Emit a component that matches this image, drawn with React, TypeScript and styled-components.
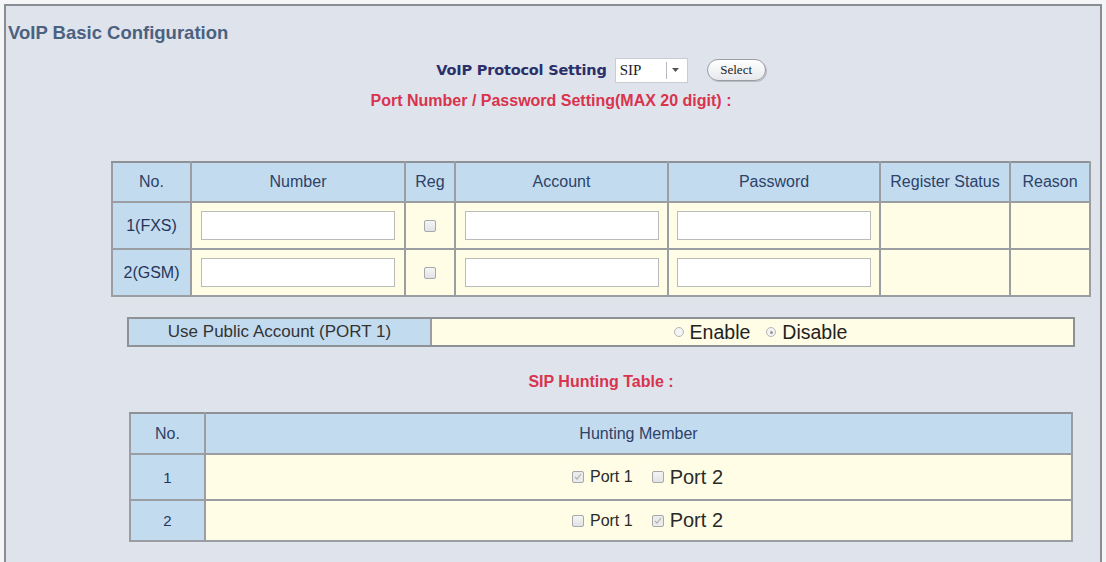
import React from "react";
import styled, { createGlobalStyle } from "styled-components";

const GlobalStyle = createGlobalStyle`
  html, body {
    margin: 0;
    padding: 0;
    background: #f4f5f7;
    font-family: "Liberation Sans", Arial, sans-serif;
  }
`;

const Frame = styled.div`
  margin: 4px 0 0 4px;
  width: 1098px;
  min-height: 560px;
  box-sizing: border-box;
  border: 2px solid #898d93;
  border-bottom: none;
  background: #dfe3ec;
  padding-top: 16px;
`;

const Title = styled.div`
  padding-left: 2px;
  font-size: 18.5px;
  font-weight: bold;
  color: #4b6180;
  line-height: 22px;
`;

const Content = styled.div`
  width: 990px;
  margin-left: 100px;
  display: flex;
  flex-direction: column;
  align-items: center;
`;

const ProtocolRow = styled.div`
  display: flex;
  align-items: center;
  gap: 8px;
  margin-top: 13px;
  height: 26px;
`;

const ProtocolLabel = styled.span`
  font-family: "DejaVu Sans", Verdana, sans-serif;
  font-size: 14.5px;
  font-weight: bold;
  color: #2b2f6a;
  letter-spacing: -0.2px;
`;

const SelectBox = styled.div`
  width: 73px;
  height: 25px;
  box-sizing: border-box;
  background: #fff;
  border: 1px solid #c9ccd2;
  display: flex;
  align-items: center;
  font-family: "Liberation Serif", "Times New Roman", serif;
  font-size: 15px;
  color: #222;
`;

const SelectValue = styled.span`
  flex: 1;
  padding-left: 4px;
`;

const SelectArrow = styled.span`
  width: 18px;
  height: 17px;
  border-left: 1px solid #b5b8be;
  display: flex;
  align-items: center;
  justify-content: center;
  margin-right: 2px;
`;

const PillButton = styled.button`
  margin-left: 11px;
  width: 59px;
  height: 22px;
  border: 1px solid #9a9da3;
  border-radius: 11px;
  background: linear-gradient(#ffffff, #e6e8ec);
  box-shadow: 1px 1px 0 #b8bbc1;
  font-family: "Liberation Serif", "Times New Roman", serif;
  font-size: 13px;
  color: #222;
  padding: 0;
`;

const RedHeading = styled.div`
  text-align: center;
  font-size: 16px;
  font-weight: bold;
  color: #d8344d;
  line-height: 20px;
`;

const PortHeading = styled(RedHeading)`
  margin-top: 8px;
  width: 1094px;
  margin-left: -100px;
`;

const Table = styled.table`
  border-collapse: collapse;
  border: 2px solid #8e9296;
  table-layout: fixed;
`;

const PortTable = styled(Table)`
  margin-top: 50px;
`;

const Th = styled.th<{ $w: number; $h?: number }>`
  width: ${(p) => p.$w}px;
  height: ${(p) => p.$h ?? 40}px;
  padding: 0;
  background: #c3dbef;
  border: 2px solid #9a9ea3;
  border-top-color: #8e9296;
  font-weight: normal;
  font-size: 16px;
  color: #2c4268;
  box-sizing: border-box;
`;

const Td = styled.td<{ $label?: boolean; $h?: number; $fs?: number }>`
  height: ${(p) => p.$h ?? 44}px;
  padding: 0;
  text-align: center;
  background: ${(p) => (p.$label ? "#c3dbef" : "#fffde5")};
  border: 2px solid #9a9ea3;
  border-top-color: ${(p) => (p.$label ? "#9a9ea3" : "#a9aba2")};
  font-size: ${(p) => p.$fs ?? 16}px;
  color: #24365a;
`;

const TextInput = styled.input`
  width: 194px;
  height: 29px;
  box-sizing: border-box;
  border: 1px solid #b9bbb6;
  background: #fff;
  display: block;
  margin: 0 auto;
`;

const Box = styled.span<{ $checked?: boolean }>`
  display: inline-flex;
  align-items: center;
  justify-content: center;
  width: 12px;
  height: 12px;
  box-sizing: border-box;
  border: 1px solid #a7a9ad;
  border-radius: 2px;
  background: ${(p) => (p.$checked ? "#ebebeb" : "linear-gradient(#f5f5f5, #e2e3e5)")};
  vertical-align: middle;
`;

const PublicTable = styled.div`
  margin-top: 20px;
  width: 948px;
  height: 30px;
  box-sizing: border-box;
  border: 2px solid #8e9296;
  display: flex;
`;

const PublicLabel = styled.div`
  width: 301px;
  background: #c3dbef;
  border-right: 2px solid #9a9ea3;
  display: flex;
  align-items: center;
  justify-content: center;
  font-size: 17px;
  color: #333;
`;

const PublicValue = styled.div`
  flex: 1;
  background: #fffde5;
  display: flex;
  align-items: center;
  justify-content: center;
  font-size: 19.5px;
  color: #222;
  padding-left: 16px;
`;

const Radio = styled.span<{ $on?: boolean }>`
  width: 10px;
  height: 10px;
  box-sizing: border-box;
  border-radius: 50%;
  border: 1px solid #b4b6ba;
  background: #f4f4f4;
  display: inline-flex;
  align-items: center;
  justify-content: center;
  margin: 0 6px 0 0;
  & + span + & {
    margin-left: 16px;
  }
  &::after {
    content: "";
    width: 3px;
    height: 3px;
    border-radius: 50%;
    background: ${(p) => (p.$on ? "#9a9a9a" : "transparent")};
  }
`;

const HuntHeading = styled(RedHeading)`
  margin-top: 25px;
`;

const HuntTable = styled(Table)`
  margin-top: 20px;
`;

const Members = styled.div`
  display: flex;
  align-items: center;
  justify-content: center;
  gap: 6px;
  padding-left: 18px;
  color: #2a2a2a;
`;

const Small = styled.span`
  font-size: 16px;
  margin-right: 13px;
`;

const Large = styled.span`
  font-size: 20px;
`;

const Check = ({ on }: { on?: boolean }) => (
  <Box $checked={on}>
    {on && (
      <svg width="8" height="8" viewBox="0 0 8 8">
        <path d="M1 4 L3 6 L7 1" fill="none" stroke="#b0b0b0" strokeWidth="1.2" />
      </svg>
    )}
  </Box>
);

const ports = ["1(FXS)", "2(GSM)"];
const hunting = [
  { no: "1", p1: true, p2: false, h: 44 },
  { no: "2", p1: false, p2: true, h: 39 },
];

export default function App() {
  return (
    <>
      <GlobalStyle />
      <Frame>
        <Title>VoIP Basic Configuration</Title>
        <Content>
          <ProtocolRow>
            <ProtocolLabel>VoIP Protocol Setting</ProtocolLabel>
            <SelectBox>
              <SelectValue>SIP</SelectValue>
              <SelectArrow>
                <svg width="7" height="4" viewBox="0 0 7 4">
                  <path d="M0 0 L7 0 L3.5 4 Z" fill="#555" />
                </svg>
              </SelectArrow>
            </SelectBox>
            <PillButton>Select</PillButton>
          </ProtocolRow>
          <PortHeading>Port Number / Password Setting(MAX 20 digit) :</PortHeading>
          <PortTable>
            <thead>
              <tr>
                <Th $w={79}>No.</Th>
                <Th $w={214}>Number</Th>
                <Th $w={50}>Reg</Th>
                <Th $w={213}>Account</Th>
                <Th $w={212}>Password</Th>
                <Th $w={130}>Register Status</Th>
                <Th $w={80}>Reason</Th>
              </tr>
            </thead>
            <tbody>
              {ports.map((p) => (
                <tr key={p}>
                  <Td $label $h={45}>{p}</Td>
                  <Td>
                    <TextInput />
                  </Td>
                  <Td>
                    <Check />
                  </Td>
                  <Td>
                    <TextInput />
                  </Td>
                  <Td>
                    <TextInput />
                  </Td>
                  <Td />
                  <Td />
                </tr>
              ))}
            </tbody>
          </PortTable>
          <PublicTable>
            <PublicLabel>Use Public Account (PORT 1)</PublicLabel>
            <PublicValue>
              <Radio />
              <span>Enable</span>
              <Radio $on />
              <span>Disable</span>
            </PublicValue>
          </PublicTable>
          <HuntHeading>SIP Hunting Table :</HuntHeading>
          <HuntTable>
            <thead>
              <tr>
                <Th $w={75} $h={41}>No.</Th>
                <Th $w={867} $h={41}>Hunting Member</Th>
              </tr>
            </thead>
            <tbody>
              {hunting.map((row) => (
                <tr key={row.no}>
                  <Td $label $h={row.h} $fs={15}>
                    {row.no}
                  </Td>
                  <Td $h={row.h}>
                    <Members>
                      <Check on={row.p1} />
                      <Small>Port 1</Small>
                      <Check on={row.p2} />
                      <Large>Port 2</Large>
                    </Members>
                  </Td>
                </tr>
              ))}
            </tbody>
          </HuntTable>
        </Content>
      </Frame>
    </>
  );
}
